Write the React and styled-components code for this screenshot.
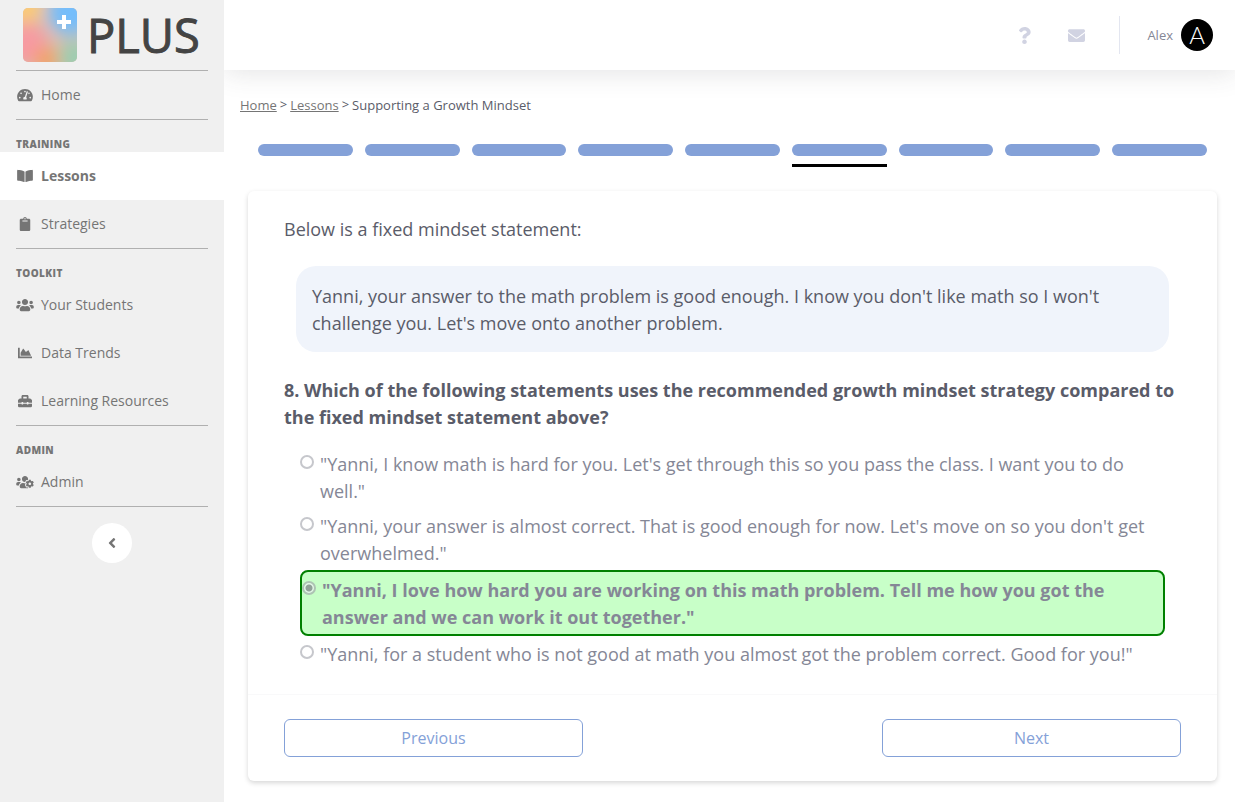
import React, { useState } from "react";
import styled, { createGlobalStyle, css } from "styled-components";
import {
  FaTachometerAlt,
  FaBookOpen,
  FaClipboard,
  FaUsers,
  FaChartArea,
  FaToolbox,
  FaUsersCog,
  FaAngleLeft,
  FaQuestion,
  FaEnvelope,
} from "react-icons/fa";

const GlobalStyle = createGlobalStyle`
  *, *::before, *::after { box-sizing: border-box; }
  body {
    margin: 0;
    background: #fff;
    color: #5a5c69;
    font-family: "Open Sans", "Noto Sans", sans-serif;
    font-size: 16px;
    line-height: 24px;
  }
`;

const Shell = styled.div`
  display: flex;
  min-height: 100vh;
`;

const Sidebar = styled.nav`
  flex: 0 0 224px;
  display: flex;
  flex-direction: column;
  background: #f0f0f0;
  color: #757575;
  position: relative;
  z-index: 1;
`;

const Brand = styled.a`
  display: flex;
  align-items: center;
  gap: 10px;
  height: 70px;
  padding-left: 23px;
  color: #444;
  font-size: 47px;
  line-height: 72px;
  -webkit-text-stroke: 1px #444;
  text-decoration: none;
`;

const Divider = styled.hr`
  width: auto;
  height: 1px;
  margin: 0 16px;
  border: 0;
  background: #b0b0b0;
`;

const Heading = styled.h2`
  margin: 0;
  padding: 16px 16px 0;
  font-size: 10px;
  line-height: 16px;
  font-weight: 800;
  letter-spacing: 0.04em;
  text-transform: uppercase;
`;

const NavLink = styled.a`
  display: flex;
  align-items: center;
  gap: 8px;
  height: 48px;
  padding: 0 16px;
  color: inherit;
  font-size: 14px;
  font-weight: ${(p) => (p.$active ? 700 : 400)};
  background: ${(p) => (p.$active ? "#fff" : "transparent")};
  text-decoration: none;
`;

const NavIcon = styled.span`
  display: flex;
  justify-content: center;
  width: 17px;

  svg {
    flex: none;
    width: 18px;
    height: 14px;
  }
`;

const Collapse = styled.button`
  display: flex;
  align-items: center;
  justify-content: center;
  align-self: center;
  width: 40px;
  height: 40px;
  margin-top: 16px;
  padding: 0;
  border: 0;
  border-radius: 50%;
  background: #fff;
  color: #757575;
  font-size: 16px;
`;

const Page = styled.div`
  flex: 1;
  min-width: 0;
`;

const Topbar = styled.header`
  display: flex;
  align-items: center;
  justify-content: flex-end;
  height: 70px;
  padding-right: 22px;
  background: #fff;
  box-shadow: 0 2px 28px rgba(58, 59, 69, 0.15);
`;

const IconButton = styled.button`
  display: flex;
  align-items: center;
  justify-content: center;
  width: 52px;
  height: 52px;
  padding: 0;
  border: 0;
  background: none;
  color: #d1d3e2;
  font-size: 17px;
`;

const Profile = styled.a`
  display: flex;
  align-items: center;
  gap: 8px;
  height: 38px;
  margin-left: 17px;
  padding-left: 27px;
  border-left: 1px solid #e3e6f0;
  color: #858796;
  font-size: 13px;
  text-decoration: none;
`;

const Avatar = styled.span`
  width: 32px;
  height: 32px;
  border-radius: 50%;
  background: #000;
  color: #fff;
  font-family: Lato, sans-serif;
  font-size: 24px;
  font-weight: 300;
  line-height: 32px;
  text-align: center;
`;

const Content = styled.main`
  padding: 23px 18px 20px 24px;
`;

const Breadcrumb = styled.div`
  display: flex;
  gap: 3px;
  margin-left: -8px;
  font-size: 13px;

  a {
    color: #757575;
  }
`;

const Separator = styled.span`
  line-height: 22px;
`;

const Steps = styled.div`
  display: flex;
  gap: 12px;
  padding: 27px 10px 24px;
`;

const Step = styled.button`
  flex: 1;
  height: 23px;
  padding: 0 0 8px;
  border: 0;
  border-bottom: 3px solid ${(p) => (p.$current ? "#000" : "transparent")};
  background: none;

  &::before {
    content: "";
    display: block;
    height: 12px;
    border-radius: 6px;
    background: #84a1d8;
  }
`;

const Card = styled.section`
  border-radius: 6px;
  background: #fff;
  box-shadow: 0 2px 5px rgba(0, 0, 0, 0.16);
  font-size: 18px;
  line-height: 27px;
`;

const CardBody = styled.div`
  padding: 25px 36px 23px;
`;

const Intro = styled.p`
  margin: 0;
`;

const Quote = styled.blockquote`
  margin: 23px 12px 25px;
  padding: 17px 16px 15px;
  border-radius: 20px;
  background: #f0f4fb;
`;

const Question = styled.fieldset`
  margin: 0;
  padding: 0;
  border: 0;
  min-width: 0;

  legend {
    padding: 0;
    font-weight: 700;
  }
`;

const Options = styled.div`
  padding: 15px 16px 0;
`;

const Option = styled.label`
  display: flex;
  gap: 6px;
  padding: 5px 0 3px;
  color: #858796;
  ${(p) =>
    p.$correct &&
    css`
      border: 2px solid green;
      border-radius: 8px;
      background: #c8ffc8;
      font-weight: 700;
    `}
`;

const Radio = styled.input`
  appearance: none;
  flex: none;
  width: 14px;
  height: 14px;
  margin: 4px 0 0;
  border: 2px solid #c6c7cc;
  border-radius: 50%;
  background: #fff;

  &:checked {
    border-color: #adc4b3;
    background: radial-gradient(circle, #91a198 3px, #e4f8e8 4px);
  }
`;

const CardFooter = styled.footer`
  display: flex;
  justify-content: space-between;
  padding: 24px 36px;
  border-top: 1px solid #f9f9fa;
`;

const OutlineButton = styled.button`
  width: 33.33%;
  height: 38px;
  padding: 0;
  border: 1px solid #84a1d8;
  border-radius: 6px;
  background: #fff;
  color: #84a1d8;
  font: inherit;
  font-size: 16px;
  line-height: 24px;
`;

function LogoMark() {
  return (
    <svg width="54" height="54" viewBox="0 0 54 54" aria-hidden="true">
      <defs>
        <clipPath id="tile">
          <rect width="54" height="54" rx="5" />
        </clipPath>
        <filter id="soft" x="-50%" y="-50%" width="200%" height="200%">
          <feGaussianBlur stdDeviation="8" />
        </filter>
      </defs>
      <g clipPath="url(#tile)">
        <rect width="54" height="54" fill="#d8bfae" />
        <g filter="url(#soft)">
          <circle cx="2" cy="-2" r="17" fill="#fccb76" />
          <circle cx="48" cy="4" r="23" fill="#75bdfb" />
          <circle cx="4" cy="36" r="21" fill="#f79aa2" />
          <circle cx="24" cy="52" r="13" fill="#f2a366" />
          <circle cx="52" cy="50" r="17" fill="#9ccdb1" />
        </g>
      </g>
      <path d="M41 7v14M34 14h14" stroke="#fff" strokeWidth="4" />
    </svg>
  );
}

function NavItem({ icon: Icon, active, children }) {
  return (
    <NavLink href="#" $active={active} aria-current={active ? "page" : undefined}>
      <NavIcon>
        <Icon />
      </NavIcon>
      {children}
    </NavLink>
  );
}

const answers = [
  `"Yanni, I know math is hard for you. Let's get through this so you pass the class. I want you to do well."`,
  `"Yanni, your answer is almost correct. That is good enough for now. Let's move on so you don't get overwhelmed."`,
  `"Yanni, I love how hard you are working on this math problem. Tell me how you got the answer and we can work it out together."`,
  `"Yanni, for a student who is not good at math you almost got the problem correct. Good for you!"`,
];

const steps = [1, 2, 3, 4, 5, 6, 7, 8, 9];

export default function App() {
  const [selected, setSelected] = useState(2);

  return (
    <>
      <GlobalStyle />
      <Shell>
        <Sidebar aria-label="Main">
          <Brand href="#">
            <LogoMark />
            PLUS
          </Brand>
          <Divider />
          <NavItem icon={FaTachometerAlt}>Home</NavItem>
          <Divider />
          <Heading>Training</Heading>
          <NavItem icon={FaBookOpen} active>
            Lessons
          </NavItem>
          <NavItem icon={FaClipboard}>Strategies</NavItem>
          <Divider />
          <Heading>Toolkit</Heading>
          <NavItem icon={FaUsers}>Your Students</NavItem>
          <NavItem icon={FaChartArea}>Data Trends</NavItem>
          <NavItem icon={FaToolbox}>Learning Resources</NavItem>
          <Divider />
          <Heading>Admin</Heading>
          <NavItem icon={FaUsersCog}>Admin</NavItem>
          <Divider />
          <Collapse type="button" aria-label="Collapse sidebar">
            <FaAngleLeft />
          </Collapse>
        </Sidebar>

        <Page>
          <Topbar>
            <IconButton type="button" aria-label="Help">
              <FaQuestion />
            </IconButton>
            <IconButton type="button" aria-label="Messages">
              <FaEnvelope />
            </IconButton>
            <Profile href="#">
              Alex
              <Avatar>A</Avatar>
            </Profile>
          </Topbar>

          <Content>
            <Breadcrumb>
              <a href="#">Home</a>
              <Separator>&gt;</Separator>
              <a href="#">Lessons</a>
              <Separator>&gt;</Separator>
              <span>Supporting a Growth Mindset</span>
            </Breadcrumb>

            <Steps>
              {steps.map((n) => (
                <Step key={n} type="button" $current={n === 6} aria-label={`Step ${n}`} />
              ))}
            </Steps>

            <Card>
              <CardBody>
                <Intro>Below is a fixed mindset statement:</Intro>
                <Quote>
                  Yanni, your answer to the math problem is good enough. I know you don't like
                  math so I won't challenge you. Let's move onto another problem.
                </Quote>
                <Question>
                  <legend>
                    8. Which of the following statements uses the recommended growth mindset
                    strategy compared to the fixed mindset statement above?
                  </legend>
                  <Options>
                    {answers.map((text, i) => (
                      <Option key={text} $correct={i === 2}>
                        <Radio
                          type="radio"
                          name="answer"
                          checked={selected === i}
                          onChange={() => setSelected(i)}
                        />
                        <span>{text}</span>
                      </Option>
                    ))}
                  </Options>
                </Question>
              </CardBody>
              <CardFooter>
                <OutlineButton type="button">Previous</OutlineButton>
                <OutlineButton type="button">Next</OutlineButton>
              </CardFooter>
            </Card>
          </Content>
        </Page>
      </Shell>
    </>
  );
}
